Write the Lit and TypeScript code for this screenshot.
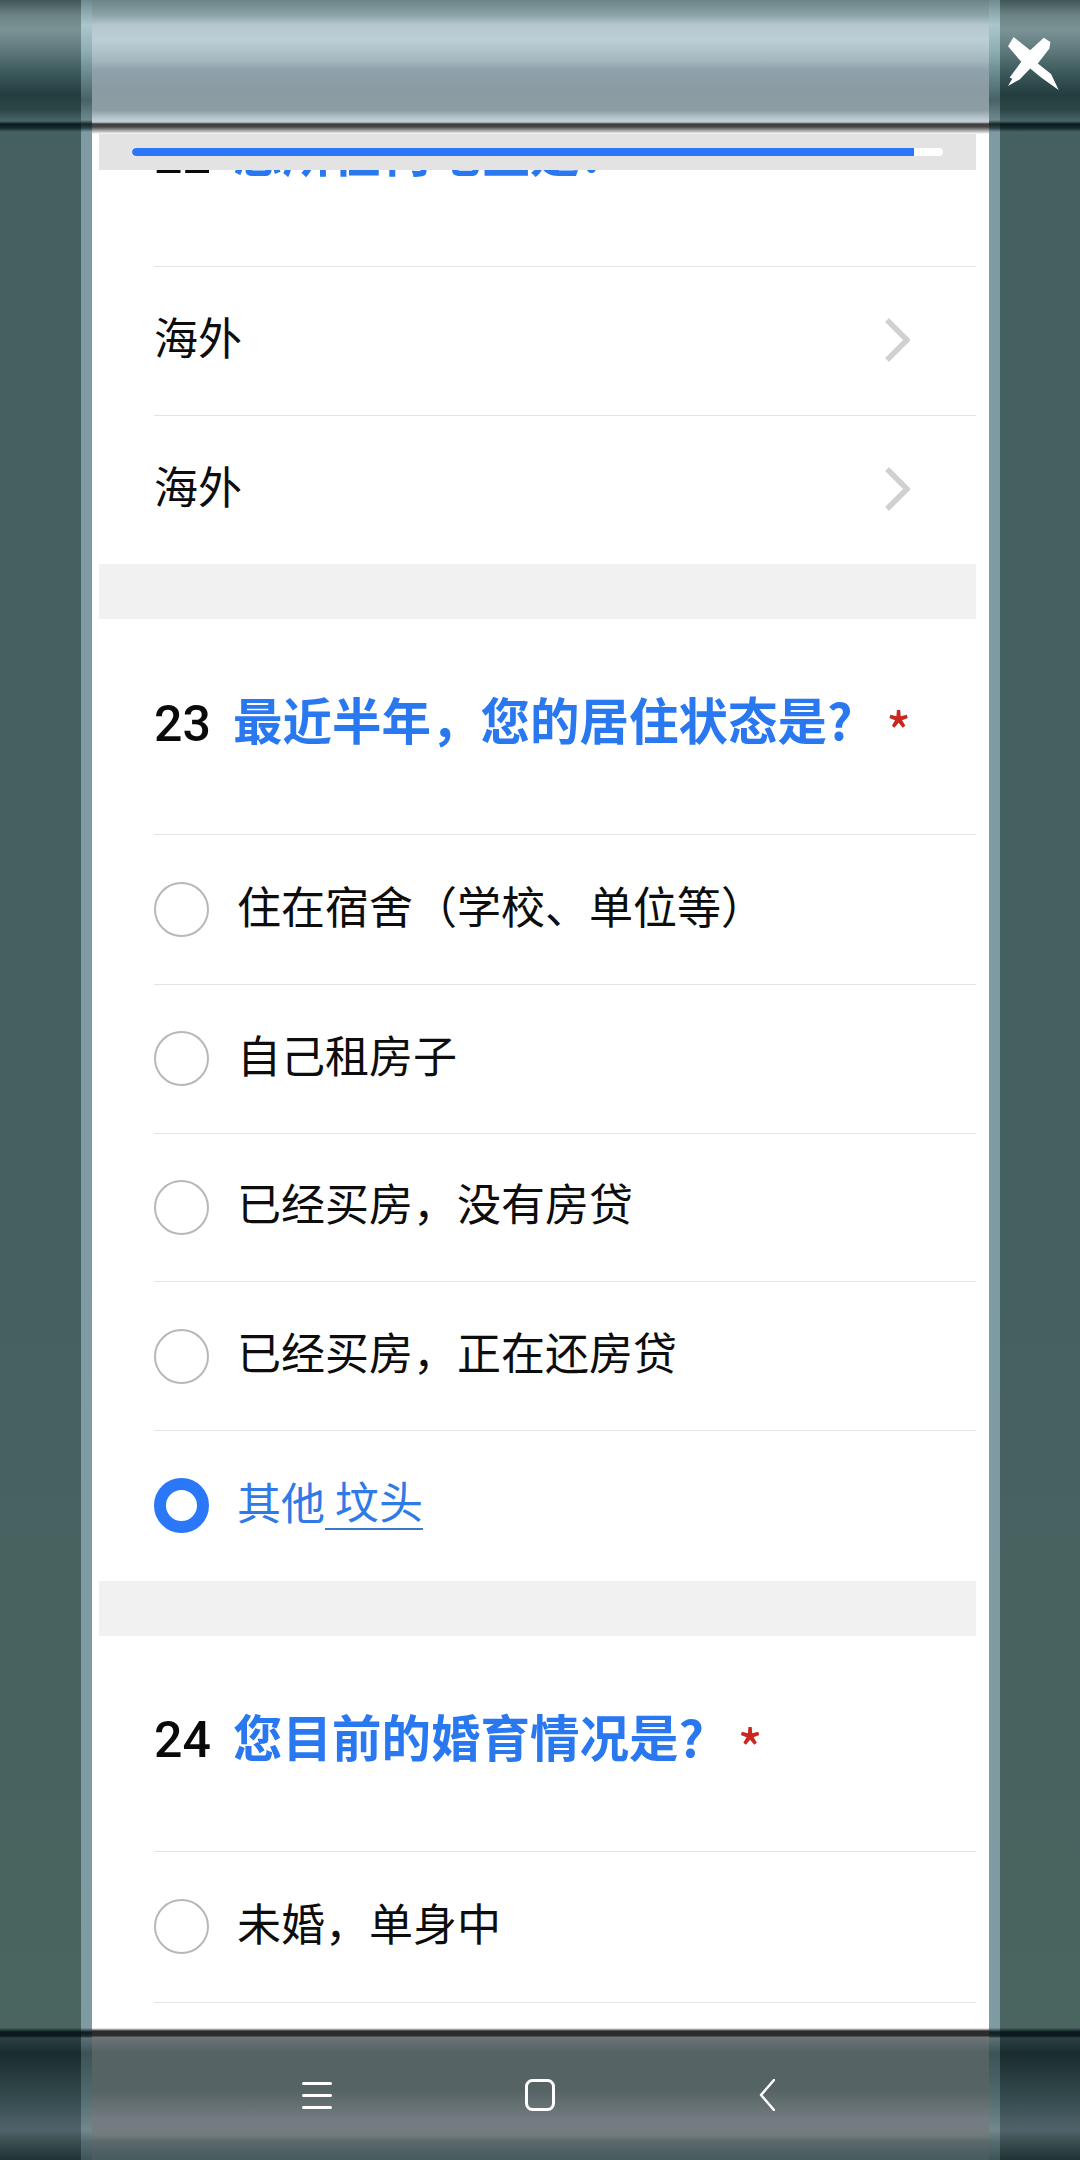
import { LitElement, html, css } from "lit";
import { customElement } from "lit/decorators.js";

const ACROSS = [
  "住在宿舍（学校、单位等）",
  "自己租房子",
  "已经买房，没有房贷",
  "已经买房，正在还房贷",
];

@customElement("app-root")
export class AppRoot extends LitElement {
  static styles = css`
    :host {
      display: block;
      width: 1080px;
      height: 2160px;
      overflow: hidden;
      font-family: "Noto Sans CJK SC", "Noto Sans", sans-serif;
      color: #111;
    }
    .page { display: flex; flex-direction: column; height: 2160px; }
    .band { display: flex; flex: none; }
    .band > .l { width: 81px; flex: none; }
    .band > .e { width: 11px; flex: none; }
    .band > .c { width: 897px; flex: none; }
    .band > .r { width: 80px; flex: none; }

    .top { height: 134px; }
    .top .l, .top .r {
      background: linear-gradient(180deg, #3f5555 0, #6c8486 15px, #7b9295 30px, #5f7a7d 50px, #3f5c5f 70px, #243d3f 95px, #2c4648 110px, #4a6567 121px, #0a1a1c 124px, #152a2c 128px, #46615f 132px);
    }
    .top .e {
      background: linear-gradient(180deg, #6d8c90 0, #aac6cd 25px, #8fb0b5 50px, #6e8f95 70px, #476267 100px, #6f8a8e 120px, #14282a 124px, #2c4448 128px, #7e9aa2 132px);
    }
    .top .c {
      background: linear-gradient(180deg, #6c8486 0, #8aa3a6 15px, #b5c8cf 25px, #bccfd6 40px, #a5b8bf 60px, #8fa1ac 70px, #8a9ba1 90px, #8c9da4 110px, #b8c4cc 118px, #c5ced8 122px, #3c3c3c 124px, #4a4a4a 127px, #b0b0b0 131px, #fff 134px);
    }
    .top .r { padding: 35px 0 0 8px; box-sizing: border-box; }
    .close { display: block; width: 53px; height: 57px; }

    .mid { flex: 1; min-height: 0; }
    .mid .l, .mid .r { background: linear-gradient(180deg, #456060 0, #456060 60%, #4a655f 100%); }
    .mid .e { background: #7e9aa2; }
    .mid .c { background: #fff; position: relative; overflow: hidden; }

    .progress {
      position: absolute;
      left: 7px;
      top: 0;
      width: 877px;
      height: 36px;
      box-sizing: border-box;
      padding: 14px 33px 0;
      background: #e3e3e3;
    }
    .track { height: 8px; background: #fff; border-radius: 4px; overflow: hidden; }
    .fill { width: 96.4%; height: 100%; background: #2a78f8; border-radius: 4px 0 0 4px; }

    .content { margin: -83px 13px 0 7px; }
    .qhead {
      height: 215px;
      box-sizing: border-box;
      padding: 0 0 9px 55px;
      display: flex;
      align-items: center;
      line-height: 60px;
    }
    .num { width: 79px; flex: none; font: 500 50px/60px Roboto, sans-serif; color: #0a0a0a; padding-top: 3px; }
    .title { font-size: 49.5px; font-weight: 700; color: #2a78f0; white-space: nowrap; padding-bottom: 6px; }
    .req { margin-left: 34px; font-size: 50px; color: #c9281e; font-weight: 500; padding-top: 12px; }

    .row {
      height: 149px;
      box-sizing: border-box;
      margin-left: 55px;
      border-top: 1px solid #e4e4e4;
      display: flex;
      align-items: center;
      font-size: 44px;
      line-height: 60px;
      color: #0d0d0d;
    }
    .opt { height: 148.67px; }
    .opt:first-of-type { height: 150px; }
    .opt:last-of-type { height: 151px; }
    .txt { padding-bottom: 10px; }
    .pick { flex: 1; }
    .chev { width: 26px; height: 46px; margin: 0 66px 2px 0; flex: none; }
    .radio {
      width: 55px;
      height: 55px;
      box-sizing: border-box;
      border: 2px solid #b8b8b8;
      border-radius: 50%;
      margin-right: 28px;
      flex: none;
    }
    .on .radio { border: 12.5px solid #2a78f8; }
    .on { color: #2f7ae6; }
    .fillin {
      margin: 0 0 10px 0;
      width: 98px;
      box-sizing: border-box;
      padding-left: 10px;
      border-bottom: 2px solid #3a78c8;
      line-height: 56px;
    }
    .gap { height: 55px; background: #f1f1f1; }

    .bottom { height: 132px; }
    .bottom .l, .bottom .r {
      background: linear-gradient(180deg, #46615f 0, #0a1a1c 4px, #0a1a1c 8px, #2c4042 10px, #1a2c2d 25px, #2e4547 62px, #50636a 102px, #3a4d50 114px, #1f3234 132px);
    }
    .bottom .e {
      background: linear-gradient(180deg, #7e9aa2 0, #0f1e20 4px, #1a2a2c 8px, #5a7073 10px, #3c5458 25px, #4c666a 62px, #71888c 102px, #566b6f 114px, #3d5558 132px);
    }
    .bottom .c {
      background: linear-gradient(180deg, #fff 0, #c8c4c8 1px, #2a2a2a 3px, #2e2e2e 8px, #6d7476 9px, #566365 24px, #566365 62px, #737c80 92px, #727b7f 107px, #5a686a 114px, #475a5c 132px);
      display: flex;
      padding: 51px 0 0 210px;
      box-sizing: border-box;
    }
    .nav { display: block; height: 32px; flex: none; }
    .nav.menu { width: 30px; margin-right: 193px; }
    .nav.home { width: 30px; margin-right: 204px; }
    .nav.back { width: 16px; }
  `;

  private chev() {
    return html`<svg class="chev" viewBox="0 0 26 46"><path d="M3 3 L23 23 L3 43" fill="none" stroke="#d0d0d0" stroke-width="5.5"/></svg>`;
  }

  private head(n: string, t: string, req = true) {
    return html`<div class="qhead">
      <span class="num">${n}</span>
      <span class="title">${t}</span>
      ${req ? html`<span class="req">*</span>` : null}
    </div>`;
  }

  render() {
    return html`<div class="page">
      <div class="band top">
        <div class="l"></div><div class="e"></div><div class="c"></div><div class="e"></div>
        <div class="r">
          <svg class="close" viewBox="445 105 160 170"><path fill="#fff" d="M445 138 L462 110 L512 150 L553 112 L573 125 L570 145 L535 190 L575 222 L598 270 L545 232 L512 205 L480 238 L445 258 L458 236 L450 232 L485 185 Z"/></svg>
        </div>
      </div>
      <div class="band mid">
        <div class="l"></div><div class="e"></div>
        <div class="c">
          <div class="content">
            ${this.head("22", "您所在何地区是?", false)}
            <div class="row"><span class="pick txt">海外</span>${this.chev()}</div>
            <div class="row"><span class="pick txt">海外</span>${this.chev()}</div>
            <div class="gap"></div>
            ${this.head("23", "最近半年，您的居住状态是?")}
            <section>
              ${ACROSS.map((t) => html`<div class="row opt"><span class="radio"></span><span class="txt">${t}</span></div>`)}
              <div class="row opt on"><span class="radio"></span><span class="txt">其他</span><span class="fillin">坟头</span></div>
            </section>
            <div class="gap"></div>
            ${this.head("24", "您目前的婚育情况是?")}
            <section>
              <div class="row opt"><span class="radio"></span><span class="txt">未婚，单身中</span></div>
            </section>
            <div class="row"></div>
          </div>
          <div class="progress"><div class="track"><div class="fill"></div></div></div>
        </div>
        <div class="e"></div><div class="r"></div>
      </div>
      <div class="band bottom">
        <div class="l"></div><div class="e"></div>
        <div class="c">
          <svg class="nav menu" viewBox="0 0 30 32"><path d="M1.5 4.5 H28.5 M1.5 16.5 H28.5 M1.5 28.5 H28.5" stroke="#fff" stroke-width="3" stroke-linecap="round"/></svg>
          <svg class="nav home" viewBox="0 0 30 32"><rect x="1.5" y="1.5" width="27" height="29" rx="6" fill="none" stroke="#fff" stroke-width="3"/></svg>
          <svg class="nav back" viewBox="0 0 16 32"><path d="M15 1 L2 16 L15 31" fill="none" stroke="#fff" stroke-width="2.5" stroke-linecap="round" stroke-linejoin="round"/></svg>
        </div>
        <div class="e"></div><div class="r"></div>
      </div>
    </div>`;
  }
}
